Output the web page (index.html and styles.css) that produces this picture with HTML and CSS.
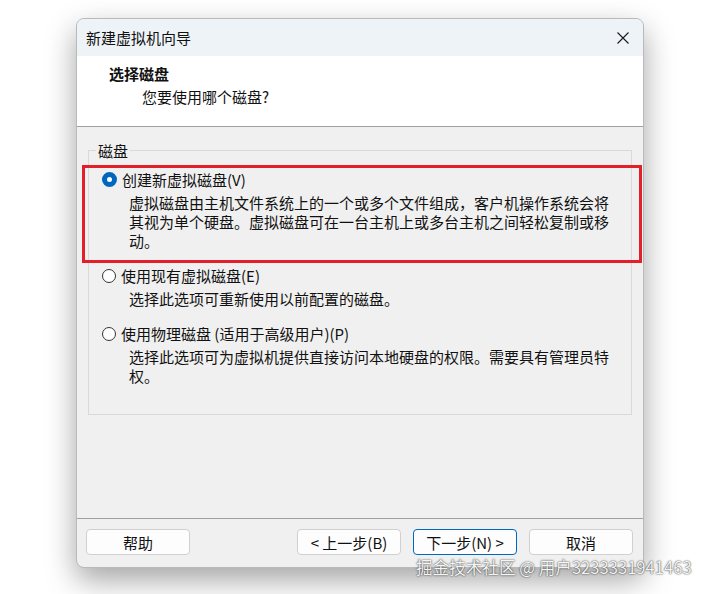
FILE: index.html
```html
<!DOCTYPE html>
<html lang="zh-CN">
  <head>
    <meta charset="UTF-8" />
    <meta name="viewport" content="width=device-width, initial-scale=1.0" />
    <title>新建虚拟机向导</title>
    <link rel="stylesheet" href="styles.css">
  </head>

  <body>
    <div class="window">
      <div class="titlebar">
        <span class="title">新建虚拟机向导</span>
        <svg class="close" width="12" height="12" viewBox="0 0 12 12">
          <path d="M0.5 0.5 L11.5 11.5 M11.5 0.5 L0.5 11.5" stroke="#1a1a1a" stroke-width="1.1" fill="none" />
        </svg>
      </div>

      <div class="header">
        <h2>选择磁盘</h2>
        <p>您要使用哪个磁盘?</p>
      </div>

      <div class="content">
        <fieldset class="group">
          <legend>磁盘</legend>

          <div class="option">
            <label class="option-label">
              <span class="radio checked"></span>
              创建新虚拟磁盘(V)
            </label>
            <p class="option-desc">虚拟磁盘由主机文件系统上的一个或多个文件组成，客户机操作系统会将<br>其视为单个硬盘。虚拟磁盘可在一台主机上或多台主机之间轻松复制或移<br>动。</p>
          </div>

          <div class="option">
            <label class="option-label">
              <span class="radio"></span>
              使用现有虚拟磁盘(E)
            </label>
            <p class="option-desc">选择此选项可重新使用以前配置的磁盘。</p>
          </div>

          <div class="option">
            <label class="option-label">
              <span class="radio"></span>
              使用物理磁盘 (适用于高级用户)(P)
            </label>
            <p class="option-desc">选择此选项可为虚拟机提供直接访问本地硬盘的权限。需要具有管理员特<br>权。</p>
          </div>
        </fieldset>
      </div>

      <div class="footer">
        <button class="btn">帮助</button>
        <div class="nav">
          <button class="btn">&lt; 上一步(B)</button>
          <button class="btn default">下一步(N) &gt;</button>
          <button class="btn">取消</button>
        </div>
      </div>

      <!-- highlight annotation -->
      <div class="highlight"></div>
    </div>

    <div class="watermark">掘金技术社区 @ 用户3233331941463</div>
  </body>
</html>
```

FILE: styles.css
```css
body {
  margin: 0;
  padding: 0;
  font-family: "Noto Sans CJK SC", "Noto Sans", sans-serif;
  font-size: 15px;
  color: #111;
  background-color: #fff;
  position: relative;
  height: 594px;
  overflow: hidden;
}

.window {
  position: relative;
  width: 566px;
  height: 548px;
  margin: 18px 0 0 76px;
  border: 1px solid #b9b9b9;
  border-radius: 8px;
  overflow: hidden;
  background-color: #f0f0f0;
  box-shadow: 0 12px 30px rgba(0, 0, 0, 0.36);
  display: flex;
  flex-direction: column;
}

.titlebar {
  height: 37px;
  display: flex;
  align-items: center;
  justify-content: space-between;
  padding: 0 14px 0 9px;
  background-color: #eef3f8;
}

.title {
  line-height: 19px;
}

.close {
  display: block;
}

.header {
  height: 71px;
  background-color: #fff;
  border-bottom: 1px solid #a0a0a0;
  padding: 8px 0 0 32px;
  box-sizing: border-box;
}

.header h2 {
  margin: 0;
  font-size: 15px;
  font-weight: bold;
  line-height: 19px;
}

.header p {
  margin: 4px 0 0 33px;
  line-height: 19px;
}

.content {
  height: 392px;
  box-sizing: border-box;
  padding: 14px 11px 0 11px;
  border-bottom: 1px solid #a0a0a0;
}

.group {
  margin: 0;
  height: 274px;
  box-sizing: border-box;
  border: 1px solid #d9d9d9;
  padding: 10px 16px 0 13px;
}

.group legend {
  margin-left: -6px;
  padding: 0 2px;
  line-height: 19px;
}

.option {
  margin-bottom: 16px;
}

.option-label {
  display: flex;
  align-items: center;
  gap: 5px;
  line-height: 19px;
}

.radio {
  width: 12px;
  height: 12px;
  border: 1px solid #333;
  border-radius: 50%;
  background-color: #fff;
}

.radio.checked {
  width: 5px;
  height: 5px;
  border: 5px solid #0067c0;
}

.option-desc {
  margin: 4px 0 0 27px;
  line-height: 19px;
}

.footer {
  flex: 1;
  display: flex;
  justify-content: space-between;
  padding: 10px 10px 0 9px;
}

.nav {
  display: flex;
  gap: 12px;
}

.btn {
  width: 104px;
  height: 26px;
  padding: 0;
  font-family: inherit;
  font-size: 15px;
  color: #111;
  background-color: #fdfdfd;
  border: 1px solid #d0d0d0;
  border-radius: 4px;
}

.btn.default {
  border-color: #0067c0;
}

.highlight {
  position: absolute;
  left: 5px;
  top: 146px;
  width: 554px;
  height: 92px;
  border: 3px solid #e3202a;
}

.watermark {
  position: absolute;
  left: 416px;
  top: 557px;
  font-size: 16.6px;
  line-height: 20px;
  color: #f4f4f4;
  text-shadow: 0 0 2px rgba(0, 0, 0, 0.65), 0 0 1px rgba(0, 0, 0, 0.5);
  white-space: nowrap;
}
```
